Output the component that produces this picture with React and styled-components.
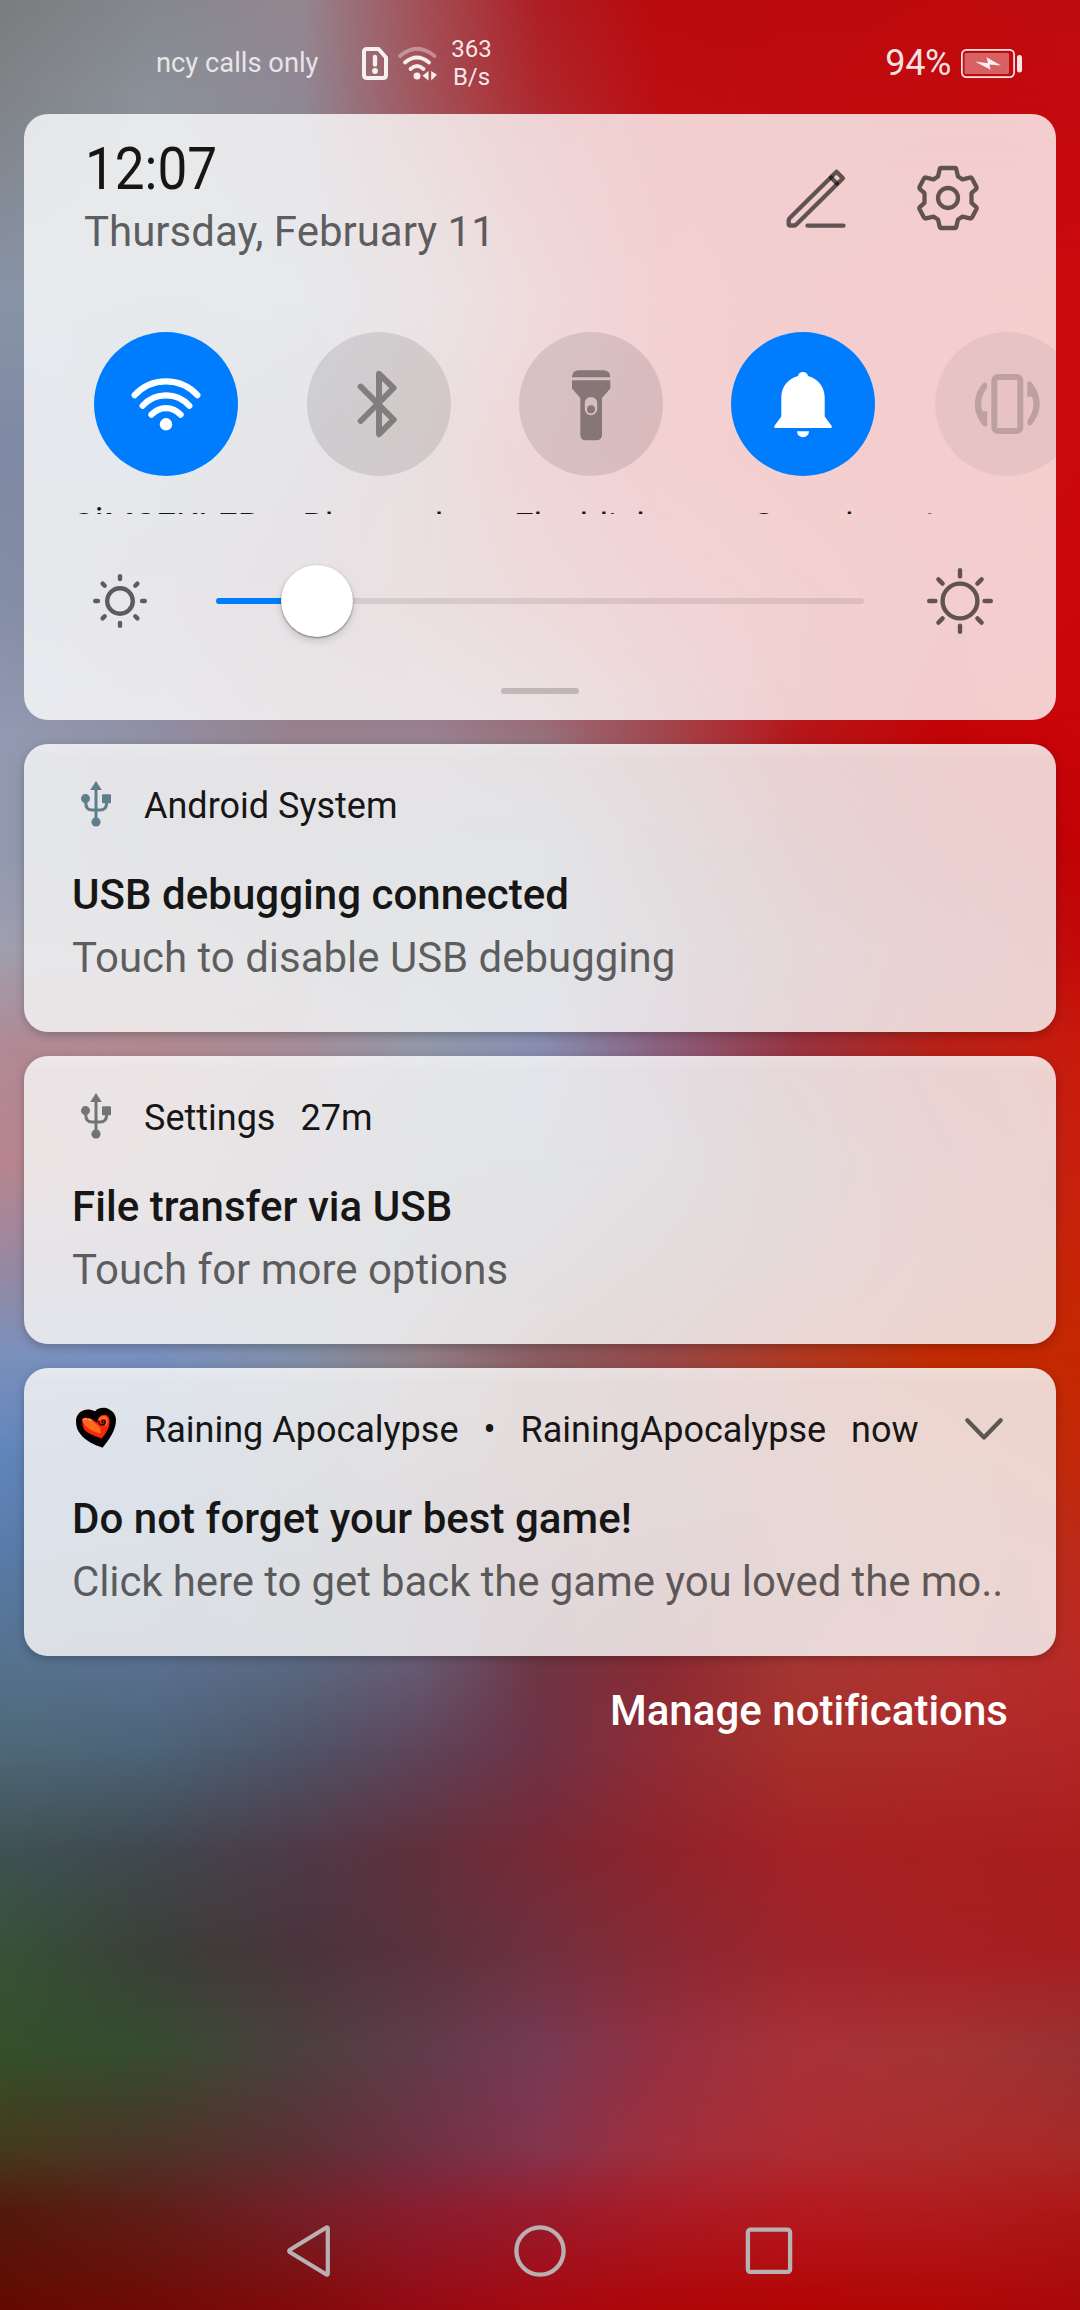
import React from "react";
import styled, { createGlobalStyle, css } from "styled-components";

const GlobalStyle = createGlobalStyle`
  * { box-sizing: border-box; }
  html, body { margin: 0; padding: 0; background: #000; }
  body { font-family: Roboto, "Noto Sans", "Liberation Sans", sans-serif; }
  svg { display: block; flex: none; overflow: visible; }
`;

/* ---------- wallpaper ---------- */

const STOPS = [0, 150, 300, 420, 540, 660, 800, 940, 1080];

const BANDS = [
  [0, ["#7b7c7e", "#84888e", "#958790", "#a35058", "#ae1e24", "#b90a0d", "#bb0a0e", "#bf0a0d", "#be0c10"]],
  [100, ["#808488", "#8b9199", "#8f8896", "#a2555c", "#ae282d", "#bc0e12", "#bf0b0f", "#c10a0e", "#c40a10"]],
  [300, ["#8894a8", "#85949f", "#8790a4", "#9a7a84", "#b0484e", "#c01c22", "#c40c10", "#c80a0e", "#cb0a0d"]],
  [450, ["#7f89a4", "#7c8c9f", "#827d8e", "#916368", "#b4343a", "#bf1820", "#c60e12", "#c80c10", "#cb0a0d"]],
  [600, ["#848ea6", "#8c8798", "#8a7480", "#9a6468", "#a84a4e", "#b83036", "#bd1a20", "#c40c10", "#cc070b"]],
  [735, ["#929ab2", "#908fa5", "#97828c", "#998292", "#97707c", "#a04850", "#b41618", "#c20407", "#c90509"]],
  [850, ["#919ab0", "#898c9a", "#868894", "#85899a", "#7d8a9a", "#885e6c", "#962a32", "#b00a0c", "#c20306"]],
  [950, ["#a09fae", "#9c98a2", "#8f8c98", "#86909c", "#808ca4", "#846c7c", "#903c48", "#aa2024", "#c20a08"]],
  [1043, ["#b08a96", "#b28890", "#a58c98", "#9298a8", "#888eb2", "#8b607f", "#98323e", "#b82016", "#c81a0c"]],
  [1160, ["#b8858f", "#b09096", "#968a94", "#858a9c", "#7e889e", "#80707e", "#8c444a", "#ac2c26", "#c8200e"]],
  [1260, ["#9a88a0", "#948a9e", "#8a8c9c", "#848698", "#847682", "#885e64", "#964440", "#b02e1c", "#c82408"]],
  [1355, ["#7b90bc", "#788fc0", "#8090a8", "#907e86", "#8a5c60", "#964848", "#b03820", "#c22a02", "#c42800"]],
  [1450, ["#6286bb", "#5c82b0", "#70788c", "#80707a", "#88585a", "#904a4c", "#a24030", "#bc3612", "#c22808"]],
  [1560, ["#587aa8", "#5a789c", "#606c80", "#6c5c6c", "#784654", "#883840", "#9c382e", "#b03820", "#bc2a1a"]],
  [1665, ["#55728c", "#5a7090", "#5a6880", "#665a72", "#6f3545", "#8a2a33", "#a63632", "#b03230", "#b82a26"]],
  [1750, ["#4f6878", "#4c6478", "#4f5468", "#5e445a", "#6e3246", "#902c36", "#a63029", "#ac2c2c", "#b22626"]],
  [1850, ["#3f5254", "#40484f", "#4e3a48", "#60303c", "#782936", "#8e232b", "#a42226", "#a8201f", "#aa1e1e"]],
  [1950, ["#375238", "#3a4038", "#4a343c", "#5a323e", "#70303e", "#882934", "#9e242b", "#a62024", "#a81e20"]],
  [2050, ["#33502a", "#364c30", "#4c4040", "#603c4a", "#763a54", "#943042", "#a83238", "#a53434", "#983232"]],
  [2150, ["#453a1c", "#4c3428", "#5c3034", "#703044", "#84344e", "#a02e3c", "#ae2c32", "#ab2c2c", "#a82a28"]],
  [2210, ["#521a0c", "#5e1e18", "#742028", "#881e30", "#981c2e", "#a81c26", "#b41a20", "#b01c1e", "#ac1816"]],
  [2310, ["#640a00", "#700a04", "#820a0a", "#960a12", "#a60810", "#ae0608", "#b20405", "#b00606", "#a8080a"]],
];

const Wallpaper = styled.div`
  position: absolute;
  inset: 0;
  overflow: hidden;
  z-index: -1;
`;

const fade = (from, to) =>
  css`
    mask-image: linear-gradient(to bottom, transparent ${from}px, #000 ${to}px);
  `;

const Band = styled.div`
  position: absolute;
  inset: 0;
  background: linear-gradient(
    to right,
    ${(p) => p.$colors.map((c, i) => `${c} ${STOPS[i]}px`).join(", ")}
  );
  ${(p) => p.$to > 0 && fade(p.$from, p.$to)}
`;

/* ---------- screen ---------- */

const Screen = styled.main`
  position: relative;
  isolation: isolate;
  display: flex;
  flex-direction: column;
  width: 1080px;
  height: 2310px;
  overflow: hidden;
`;

const StatusBar = styled.header`
  display: flex;
  align-items: center;
  height: 114px;
  padding: 12px 58px 0 156px;
  color: rgba(255, 255, 255, 0.9);
`;

const Carrier = styled.span`
  width: 206px;
  font-size: 27.3px;
  line-height: 32px;
  white-space: nowrap;
  color: rgba(255, 255, 255, 0.8);
`;

const NetSpeed = styled.span`
  width: 44px;
  margin-left: 12.5px;
  font-size: 24px;
  line-height: 28px;
  text-align: center;
`;

const BatteryText = styled.span`
  margin: 0 10px 0 auto;
  font-size: 36px;
  line-height: 42px;
  letter-spacing: -0.4px;
`;

/* ---------- quick settings ---------- */

const QuickPanel = styled.section`
  display: flex;
  flex-direction: column;
  height: 606px;
  margin: 0 24px;
  border-radius: 24px;
  overflow: hidden;
  background: rgba(255, 255, 255, 0.8);
`;

const PanelHeader = styled.div`
  display: flex;
  justify-content: space-between;
  height: 218px;
  padding: 25px 77px 0 60px;
  flex: none;
`;

const Clock = styled.div`
  width: 150px;
  padding-left: 1px;
  font-size: 59px;
  line-height: 60px;
  font-weight: 400;
  color: #161616;
  transform: scaleX(0.9);
  transform-origin: left;
  white-space: nowrap;
`;

const DateText = styled.div`
  margin-top: 9px;
  font-size: 42px;
  line-height: 48px;
  color: rgba(0, 0, 0, 0.62);
`;

const HeaderActions = styled.div`
  display: flex;
  gap: 71px;
  height: 64px;
  margin-top: 27px;
  color: rgba(0, 0, 0, 0.6);
`;

const Tiles = styled.div`
  display: flex;
  gap: 68.3px;
  height: 182px;
  padding-left: 70.3px;
  overflow: hidden;
  flex: none;
`;

const Tile = styled.div`
  display: flex;
  flex-direction: column;
  align-items: center;
  width: 144px;
  flex: none;
  ${(p) => p.$dim && "opacity: 0.5; margin-left: -8.8px;"}
`;

const TileDisc = styled.div`
  width: 144px;
  height: 144px;
  flex: none;
  border-radius: 50%;
  background: ${(p) => (p.$on ? "#007dff" : "rgba(0, 0, 0, 0.1)")};
  color: ${(p) => (p.$on ? "#fff" : "rgba(0, 0, 0, 0.38)")};
`;

const TileLabel = styled.div`
  margin-top: 29px;
  font-size: 35.5px;
  line-height: 42px;
  white-space: nowrap;
  color: #161616;
`;

const BrightnessRow = styled.div`
  display: flex;
  align-items: center;
  height: 174px;
  padding-left: 66px;
  flex: none;
  color: rgba(0, 0, 0, 0.6);
`;

const Track = styled.div`
  position: relative;
  width: 648px;
  height: 6px;
  margin: 0 60px 0 66px;
  border-radius: 3px;
  background: rgba(0, 0, 0, 0.09);
`;

const TrackFill = styled.div`
  width: ${(p) => p.$value}px;
  height: 6px;
  border-radius: 3px;
  background: #007dff;
`;

const Thumb = styled.div`
  position: absolute;
  top: -33px;
  left: ${(p) => p.$value - 36}px;
  width: 72px;
  height: 72px;
  border-radius: 50%;
  background: #fff;
  box-shadow: 0 1px 2px rgba(0, 0, 0, 0.42), 0 4px 9px rgba(0, 0, 0, 0.14);
`;

const DragHandle = styled.div`
  width: 78px;
  height: 6px;
  border-radius: 3px;
  align-self: center;
  background: rgba(0, 0, 0, 0.18);
`;

/* ---------- notifications ---------- */

const NotificationList = styled.section`
  display: flex;
  flex-direction: column;
  gap: 24px;
  padding: 24px 24px 0;
`;

const Card = styled.article`
  height: 288px;
  padding: 41px 48px 0;
  border-radius: 24px;
  background: linear-gradient(
      to bottom,
      rgba(255, 255, 255, 0.16),
      rgba(255, 255, 255, 0) 16px
    ),
    rgba(245, 245, 245, 0.84);
  position: relative;
  &::before {
    content: "";
    position: absolute;
    inset: 0;
    border-radius: 24px;
    box-shadow: 0 3px 10px rgba(0, 0, 0, 0.22);
    clip-path: path(
      evenodd,
      "M-24 -11 H1056 V299 H-24 Z M24 0 H1008 A24 24 0 0 1 1032 24 V264 A24 24 0 0 1 1008 288 H24 A24 24 0 0 1 0 264 V24 A24 24 0 0 1 24 0 Z"
    );
  }
`;

const CardHeader = styled.div`
  display: flex;
  align-items: center;
  height: 42px;
  margin-bottom: 36px;
  font-size: 36px;
  line-height: 42px;
  color: #161616;
  white-space: nowrap;
`;

const IconSlot = styled.span`
  display: flex;
  justify-content: center;
  width: 48px;
  margin: -4px 24px 0 0;
  color: ${(p) => p.$color};
`;

const Meta = styled.span`
  margin-left: 25px;
`;

const Bullet = styled.span`
  width: 12px;
  margin-left: 25px;
  display: flex;
  justify-content: center;
`;

const ExpandSlot = styled.span`
  margin-left: auto;
  padding-right: 5px;
  color: rgba(0, 0, 0, 0.6);
`;

const Title = styled.div`
  font-size: 42px;
  line-height: 63px;
  font-weight: 500;
  letter-spacing: 0.04px;
  color: #161616;
  white-space: nowrap;
`;

const Body = styled.div`
  font-size: 42px;
  line-height: 63px;
  letter-spacing: ${(p) => (p.$tight ? "-0.11px" : "-0.02px")};
  color: rgba(0, 0, 0, 0.6);
  white-space: nowrap;
`;

const Manage = styled.div`
  align-self: flex-end;
  margin: 30px 72px 0 0;
  font-size: 42px;
  line-height: 50px;
  font-weight: 500;
  letter-spacing: 0.02px;
  color: #fff;
`;

const NavBar = styled.nav`
  display: grid;
  grid-template-columns: repeat(3, 230px);
  justify-content: center;
  justify-items: center;
  align-items: center;
  height: 118px;
  margin-top: auto;
  color: #b8b1b1;
`;

/* ---------- icons ---------- */

const line = {
  fill: "none",
  stroke: "currentColor",
  strokeLinecap: "round",
  strokeLinejoin: "round",
};

const SimIcon = () => (
  <svg width="26" height="33" viewBox="0 0 26 33">
    <path
      d="M5 2 H16.5 L24 10.5 V28 Q24 31 21 31 H5 Q2 31 2 28 V5 Q2 2 5 2 Z"
      {...line}
      strokeWidth="4"
    />
    <path d="M13 10 V17.5" {...line} strokeWidth="4.4" />
    <circle cx="13" cy="24" r="2.9" fill="currentColor" />
  </svg>
);

const WifiStatus = styled.svg`
  margin-left: 10px;
`;

const WifiStatusIcon = () => (
  <WifiStatus width="39" height="33" viewBox="0 0 39 33">
    <g {...line} strokeWidth="3.8">
      <path d="M2 9 Q19 -5.5 36.500 9" opacity="0.4" />
      <path d="M7 15.500 Q19 5.500 31 15.500" />
      <path d="M12.500 22 Q19 16 25.500 22" />
    </g>
    <circle cx="19" cy="29" r="3.500" fill="currentColor" />
    <path d="M24.500 28.800 L30.500 24 V33.500 Z M33.200 24 L39 27.800 L33.200 33.500 Z" fill="currentColor" />
  </WifiStatus>
);

const BatteryIcon = () => (
  <svg width="61" height="29" viewBox="0 0 61 29">
    <rect x="0.9" y="0.9" width="52.2" height="27.2" rx="4.500" fill="none" stroke="currentColor" strokeWidth="1.700" />
    <rect x="3.500" y="4" width="44.500" height="21" rx="1.500" fill="currentColor" opacity="0.4" />
    <path d="M14 12.500 L27 14.300 L25.500 8.300 L40 16.500 L28.500 15.500 L29.500 20.800 Z" fill="currentColor" />
    <rect x="56" y="6" width="5" height="17.500" rx="2.500" fill="currentColor" />
  </svg>
);

const PencilIcon = () => (
  <svg width="60" height="64" viewBox="0 0 60 64">
    <g {...line} strokeWidth="4.300">
      <path d="M50.500 5.700 L57 12.300 L10.300 58.500 Q9.300 59.500 8 59.500 H4.300 Q2.700 59.500 2.700 57.900 V54.500 Q2.700 53 3.800 52 Z" />
      <path d="M45 11.500 L51 17.500" />
      <path d="M21.500 59.700 H57.500" />
    </g>
  </svg>
);

const GearIcon = () => (
  <svg width="62" height="64" viewBox="-31 -32 62 64">
    <g {...line} strokeWidth="4.300">
      <path d="M-7 -30 H7 Q8 -30 8.300 -28.800 L10 -21.500 L14.500 -18.700 L22 -20.400 Q23.300 -20.700 23.900 -19.700 L28.500 -11 Q29 -10 28.300 -9.100 L23.500 -4.800 V4.800 L28.300 9.100 Q29 10 28.500 11 L23.900 19.700 Q23.300 20.700 22 20.400 L14.500 18.700 L10 21.500 L8.300 28.800 Q8 30 7 30 H-7 Q-8 30 -8.300 28.800 L-10 21.500 L-14.500 18.700 L-22 20.400 Q-23.300 20.700 -23.900 19.700 L-28.500 11 Q-29 10 -28.300 9.100 L-23.500 4.800 V-4.800 L-28.300 -9.100 Q-29 -10 -28.500 -11 L-23.900 -19.700 Q-23.300 -20.700 -22 -20.400 L-14.500 -18.700 L-10 -21.500 L-8.300 -28.800 Q-8 -30 -7 -30 Z" />
      <circle r="10" />
    </g>
  </svg>
);

const TileSvg = ({ children }) => (
  <svg width="144" height="144" viewBox="0 0 144 144">
    {children}
  </svg>
);

const WifiIcon = () => (
  <TileSvg>
    <g {...line} strokeWidth="6.200">
      <path d="M40.600 63.200 C57.500 44.700 86.500 44.700 103.400 63.200" />
      <path d="M48.600 73.800 C61 59.800 83 59.800 95.400 73.800" />
      <path d="M57.400 82.700 C65.500 73.800 78.500 73.800 86.600 82.700" />
    </g>
    <circle cx="72" cy="92.300" r="6.200" fill="currentColor" />
  </TileSvg>
);

const BluetoothIcon = () => (
  <TileSvg>
    <path
      d="M53.700 54.700 L86.600 87.600 L72 102.200 V41.800 L86.600 56 L53.700 89"
      {...line}
      strokeWidth="6"
    />
  </TileSvg>
);

const TorchIcon = () => (
  <TileSvg>
    <path d="M53 45.300 Q53 38.300 60 38.300 H84 Q91.300 38.300 91.300 45.300 Z" fill="currentColor" />
    <path
      fillRule="evenodd"
      fill="currentColor"
      d="M53 48.300 H91.300 V56.600 L83 66 V102.500 Q83 108.300 77.200 108.300 H67 Q61.300 108.300 61.300 102.500 V66 L53 56.600 Z M72 65 A6.200 6.200 0 0 0 65.800 71.200 V77 A6.200 6.200 0 0 0 78.200 77 V71.200 A6.200 6.200 0 0 0 72 65 Z"
    />
    <circle cx="72" cy="77.300" r="4" fill="currentColor" />
  </TileSvg>
);

const BellIcon = () => (
  <TileSvg>
    <path
      fill="currentColor"
      d="M67 44 A5.100 5.100 0 0 1 77 44 C87 46.500 93.700 55 93.700 65.500 V84.500 L100.500 93.800 Q101.500 96 99.500 96 H44.500 Q42.500 96 43.500 93.800 L50.300 84.500 V65.500 C50.300 55 57 46.500 67 44 Z"
    />
    <path fill="currentColor" d="M66 99.300 H78 A6 6 0 0 1 66 99.300 Z" />
  </TileSvg>
);

const RotateHalf = () => (
  <path
    d="M51.800 51.500 Q50 49 47.500 52 C37 64 37.500 81 48 93.500 Q51 96 52.300 93 V79.300 H47.500 C45 71 46.500 64 51.500 56.500 Q53 54 51.800 51.500 Z"
    fill="currentColor"
  />
);

const RotateIcon = () => (
  <TileSvg>
    <rect x="59.300" y="45" width="26" height="54" rx="3.500" {...line} strokeWidth="6" />
    <RotateHalf />
    <g transform="rotate(180 72.300 72)">
      <RotateHalf />
    </g>
  </TileSvg>
);

const SunIcon = ({ size, ring, inner, outer, dInner, dOuter }) => (
  <svg width={size} height={size} viewBox={`${-size / 2} ${-size / 2} ${size} ${size}`}>
    <g {...line} strokeWidth="4.400">
      <circle r={ring} />
      {[0, 90, 180, 270].map((a) => (
        <g key={a} transform={`rotate(${a})`}>
          <path d={`M0 ${-inner} V${-outer}`} />
          <path d={`M${dInner} ${-dInner} L${dOuter} ${-dOuter}`} />
        </g>
      ))}
    </g>
  </svg>
);

const UsbIcon = () => (
  <svg width="30" height="46" viewBox="0 0 30 46">
    <g fill="currentColor">
      <path d="M15 0 L20.800 9 H9.200 Z" />
      <circle cx="15" cy="41" r="4.600" />
      <circle cx="4.500" cy="17.600" r="4.500" />
      <rect x="21" y="13.300" width="9" height="9" rx="1" />
    </g>
    <path
      d="M15 8 V40 M4.800 19 V22 Q4.800 29 11 29 H19 Q25.600 29 25.600 22 V20"
      fill="none"
      stroke="currentColor"
      strokeWidth="3"
    />
  </svg>
);

const HeartIcon = () => (
  <svg width="42" height="42" viewBox="0 0 42 42">
    <path
      d="M8 3.500 C12 2 16 2.500 20 4.200 C23 1 27 0.500 31 1 C37 3 41 7 41 13 C41 23 34 33 27.500 40.700 C20 38 10 34 5 26.500 C2 23 1 19 1 14 C1 9 4 5 8 3.500 Z"
      fill="#050000"
    />
    <path
      d="M7 12 C11 9.500 17 11 22 16 C22.500 10 27 7 31 8 C36 10 35 17 33 22 C31 26 29 29 26.500 31.500 C20 29 9.500 26 8 20 C7.500 17 6.800 14.500 7 12 Z"
      fill="#f4280a"
    />
    <path
      d="M7.500 12 C12 10.500 17 12.500 22 18 C25 20.500 26 22 25.500 26.500 C17 24.500 8 20 7.500 12 Z M23 15 C23 10 28 8 31 9.500 C34 12 33 17 30.500 20 C31 15 29 11.500 26 12.500 Z"
      fill="#ff6a1c"
    />
    <path d="M9 12 C12 11.500 15 12.500 17 13.500" {...line} stroke="#ffc79a" strokeWidth="1" strokeDasharray="2.500 2.200" />
    <path d="M28 15.700 C26.500 15.700 26.800 13 29 13.300 C31.300 14 30.200 17.800 27.500 17.900 C25 17.900 23.500 16.500 23.500 14" {...line} stroke="#1c0500" strokeWidth="1.500" />
  </svg>
);

const ChevronIcon = () => (
  <svg width="38" height="24" viewBox="0 0 38 24">
    <path d="M2.300 2.300 L19 19.500 L35.700 2.300" {...line} strokeWidth="4.300" />
  </svg>
);

const BackIcon = () => (
  <svg width="46" height="54" viewBox="1.500 0 46 54">
    <path d="M42.300 4.500 V49.500 Q42.300 51.500 40.500 50.300 L4.500 28.300 Q2.800 27 4.500 25.700 L40.500 3.700 Q42.300 2.500 42.300 4.500 Z" {...line} strokeWidth="4.200" />
  </svg>
);

const HomeIcon = () => (
  <svg width="54" height="54" viewBox="0 0 54 54">
    <circle cx="27" cy="27" r="23.600" {...line} strokeWidth="4.300" />
  </svg>
);

const RecentIcon = () => (
  <svg width="48" height="48" viewBox="0.800 0 48 48">
    <rect x="2.700" y="2.700" width="42.200" height="42.200" rx="2.500" {...line} strokeWidth="4.300" />
  </svg>
);

/* ---------- content ---------- */

const TILES = [
  { label: "ŞİMŞEKLER", icon: <WifiIcon />, on: true },
  { label: "Bluetooth", icon: <BluetoothIcon /> },
  { label: "Flashlight", icon: <TorchIcon /> },
  { label: "Sound", icon: <BellIcon />, on: true },
  { label: "Auto-rotate", icon: <RotateIcon />, dim: true },
];

const NOTIFICATIONS = [
  {
    app: "Android System",
    icon: <UsbIcon />,
    color: "#5e7e8b",
    title: "USB debugging connected",
    body: "Touch to disable USB debugging",
  },
  {
    app: "Settings",
    time: "27m",
    icon: <UsbIcon />,
    color: "#717476",
    title: "File transfer via USB",
    body: "Touch for more options",
  },
  {
    app: "Raining Apocalypse",
    channel: "RainingApocalypse",
    time: "now",
    expandable: true,
    icon: <HeartIcon />,
    title: "Do not forget your best game!",
    body: "Click here to get back the game you loved the mo..",
  },
];

const BRIGHTNESS = 101;

const Notification = ({ app, channel, time, icon, color, title, body, expandable }) => (
  <Card>
    <CardHeader>
      <IconSlot $color={color}>{icon}</IconSlot>
      <span>{app}</span>
      {channel && <Bullet>•</Bullet>}
      {channel && <Meta>{channel}</Meta>}
      {time && <Meta>{time}</Meta>}
      {expandable && (
        <ExpandSlot>
          <ChevronIcon />
        </ExpandSlot>
      )}
    </CardHeader>
    <Title>{title}</Title>
    <Body $tight={expandable}>{body}</Body>
  </Card>
);

export default function App() {
  return (
    <Screen>
      <GlobalStyle />
      <Wallpaper>
        {BANDS.map(([y, colors], i) => (
          <Band key={y} $colors={colors} $from={i ? BANDS[i - 1][0] : 0} $to={y} />
        ))}
      </Wallpaper>

      <StatusBar>
        <Carrier>ncy calls only</Carrier>
        <SimIcon />
        <WifiStatusIcon />
        <NetSpeed>
          363
          <br />
          B/s
        </NetSpeed>
        <BatteryText>94%</BatteryText>
        <BatteryIcon />
      </StatusBar>

      <QuickPanel>
        <PanelHeader>
          <div>
            <Clock>12:07</Clock>
            <DateText>Thursday, February 11</DateText>
          </div>
          <HeaderActions>
            <PencilIcon />
            <GearIcon />
          </HeaderActions>
        </PanelHeader>
        <Tiles>
          {TILES.map((t) => (
            <Tile key={t.label} $dim={t.dim}>
              <TileDisc $on={t.on}>{t.icon}</TileDisc>
              <TileLabel>{t.label}</TileLabel>
            </Tile>
          ))}
        </Tiles>
        <BrightnessRow>
          <SunIcon size={60} ring={12.8} inner={22} outer={24.8} dInner={15.3} dOuter={17.4} />
          <Track>
            <TrackFill $value={BRIGHTNESS} />
            <Thumb $value={BRIGHTNESS} />
          </Track>
          <SunIcon size={72} ring={17.4} inner={24.6} outer={30.8} dInner={17.4} dOuter={21.6} />
        </BrightnessRow>
        <DragHandle />
      </QuickPanel>

      <NotificationList>
        {NOTIFICATIONS.map((n) => (
          <Notification key={n.title} {...n} />
        ))}
      </NotificationList>
      <Manage>Manage notifications</Manage>

      <NavBar>
        <BackIcon />
        <HomeIcon />
        <RecentIcon />
      </NavBar>
    </Screen>
  );
}
